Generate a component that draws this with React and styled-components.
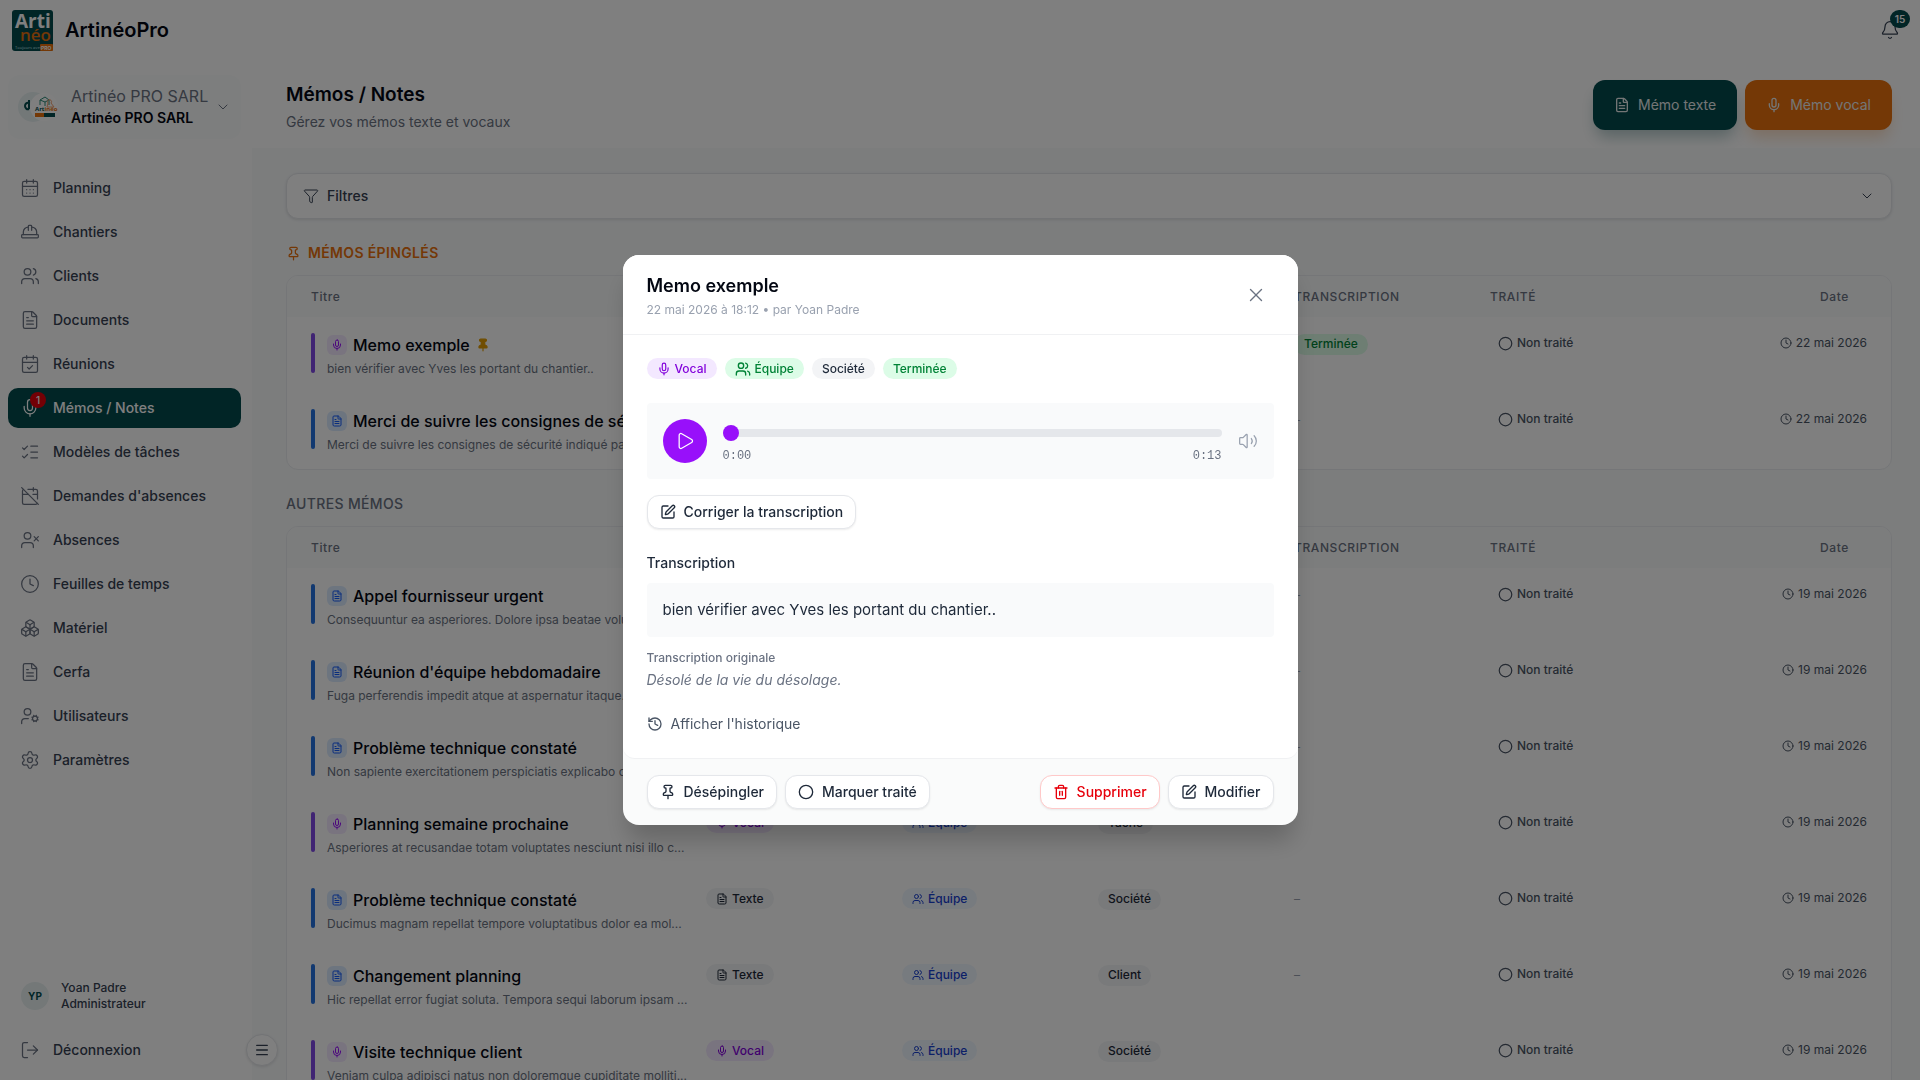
import React, { useState } from "react";
import styled, { createGlobalStyle, css } from "styled-components";
import {
  Bell, Boxes, CalendarCheck, CalendarDays, CalendarOff, ChevronDown, Circle, Clock,
  FileText, Funnel, HardHat, History, ListChecks, LogOut, Menu, Mic, Pin, Play, Settings,
  SquarePen, Trash2, UserCog, UserX, Users, Volume2, X,
} from "lucide-react";

const navItems = [
  { label: "Planning", icon: CalendarDays },
  { label: "Chantiers", icon: HardHat },
  { label: "Clients", icon: Users },
  { label: "Documents", icon: FileText },
  { label: "Réunions", icon: CalendarCheck },
  { label: "Mémos / Notes", icon: Mic, active: true, count: 1 },
  { label: "Modèles de tâches", icon: ListChecks },
  { label: "Demandes d'absences", icon: CalendarOff },
  { label: "Absences", icon: UserX },
  { label: "Feuilles de temps", icon: Clock },
  { label: "Matériel", icon: Boxes },
  { label: "Cerfa", icon: FileText },
  { label: "Utilisateurs", icon: UserCog },
  { label: "Paramètres", icon: Settings },
];

const pinnedMemos = [
  { id: 1, type: "vocal", title: "Memo exemple", text: "bien vérifier avec Yves les portant du chantier..", pinned: true, target: "Société", status: "Terminée", date: "22 mai 2026" },
  { id: 2, type: "texte", title: "Merci de suivre les consignes de sécurité", text: "Merci de suivre les consignes de sécurité indiqué par…", pinned: true, target: "Société", status: "–", date: "22 mai 2026" },
];

const otherMemos = [
  { id: 3, type: "texte", title: "Appel fournisseur urgent", text: "Consequuntur ea asperiores. Dolore ipsa beatae volu…", target: "Société", status: "–", date: "19 mai 2026" },
  { id: 4, type: "texte", title: "Réunion d'équipe hebdomadaire", text: "Fuga perferendis impedit atque at aspernatur itaque…", target: "Société", status: "–", date: "19 mai 2026" },
  { id: 5, type: "texte", title: "Problème technique constaté", text: "Non sapiente exercitationem perspiciatis explicabo c…", target: "Client", status: "–", date: "19 mai 2026" },
  { id: 6, type: "vocal", title: "Planning semaine prochaine", text: "Asperiores at recusandae totam voluptates nesciunt nisi illo c...", target: "Tâche", status: "", date: "19 mai 2026" },
  { id: 7, type: "texte", title: "Problème technique constaté", text: "Ducimus magnam repellat tempore voluptatibus dolor ea mol...", target: "Société", status: "–", date: "19 mai 2026" },
  { id: 8, type: "texte", title: "Changement planning", text: "Hic repellat error fugiat soluta. Tempora sequi laborum ipsam ...", target: "Client", status: "–", date: "19 mai 2026" },
  { id: 9, type: "vocal", title: "Visite technique client", text: "Veniam culpa adipisci natus non doloremque cupiditate molliti...", target: "Société", status: "", date: "19 mai 2026" },
];

function Logo() {
  return (
    <svg width="41" height="41" viewBox="0 0 41 41" overflow="visible" role="img" aria-label="Artinéo">
      <rect width="41" height="41" rx="3" fill="#034a4d" />
      <rect x="28" y="34" width="13" height="7" rx="1" fill="#e8700c" />
      <text x="3" y="18" fontFamily="Open Sans, sans-serif" fontWeight="700" fontSize="19" fill="#fff">Arti</text>
      <text x="8" y="31" fontFamily="Open Sans, sans-serif" fontWeight="600" fontSize="17" fill="#e8700c">néo</text>
      <text x="3" y="39" fontFamily="Open Sans, sans-serif" fontSize="4" fill="#8fc0c2">Toujours avec</text>
      <text x="29" y="40" fontFamily="Inter, sans-serif" fontWeight="700" fontSize="5" fill="#fff">PRO</text>
    </svg>
  );
}

function CompanyMark() {
  return (
    <svg width="40" height="32" viewBox="0 0 40 32" overflow="visible" aria-hidden="true">
      <circle cx="15" cy="16" r="15" fill="#e6f0f1" />
      <path d="M11 9v9M11 12c-2-1-4 1-4 3s2 4 4 3" fill="none" stroke="#034a4d" strokeWidth="2" />
      <circle cx="26" cy="16" r="14" fill="#fff" />
      <path d="M22 14v-5l5-3 4 3v5M22 9l5 2 4-2M27 11v4" fill="none" stroke="#2c8a78" strokeWidth="1" />
      <path d="M30 12a2 2 0 1 1 3 0l3 4h-7z" fill="none" stroke="#f0a171" strokeWidth="1" />
      <text x="17" y="20" fontFamily="Open Sans, sans-serif" fontWeight="700" fontSize="6" fill="#034a4d">Art<tspan fill="#e8700c">inéo</tspan></text>
      <rect x="17" y="22" width="9" height="4" fill="#e8700c" />
      <rect x="26" y="22" width="11" height="4" fill="#034a4d" />
    </svg>
  );
}

function MemoTable({ memos, label }) {
  return (
    <TableCard>
      <Table aria-label={label}>
        <colgroup>
          <col />
          <SmallCol span="5" />
          <DateCol />
        </colgroup>
        <thead>
          <tr>
            <Th>Titre</Th>
            <Th $upper>Type</Th>
            <Th $upper>Portée</Th>
            <Th $upper>Contexte</Th>
            <Th $upper>Transcription</Th>
            <Th $upper>Traité</Th>
            <Th $right>Date</Th>
          </tr>
        </thead>
        <tbody>
          {memos.map((memo) => {
            const vocal = memo.type === "vocal";
            const TypeIcon = vocal ? Mic : FileText;
            return (
              <tr key={memo.id}>
                <Td>
                  <Memo>
                    <MemoBar $vocal={vocal} />
                    <MemoBody>
                      <MemoTitle>
                        <MemoIcon $vocal={vocal}><TypeIcon size={12} /></MemoIcon>
                        <span>{memo.title}</span>
                        {memo.pinned && <Pin size={14} color="#e09a00" fill="#e09a00" />}
                      </MemoTitle>
                      <MemoText>{memo.text}</MemoText>
                    </MemoBody>
                  </Memo>
                </Td>
                <Td><Badge $tone={vocal ? "purple" : "gray"}><TypeIcon size={12} />{vocal ? "Vocal" : "Texte"}</Badge></Td>
                <Td><Badge $tone="blue"><Users size={12} />Équipe</Badge></Td>
                <Td><Badge $tone="gray">{memo.target}</Badge></Td>
                <Td>{memo.status === "Terminée" ? <Badge $tone="green">Terminée</Badge> : <Dash>{memo.status}</Dash>}</Td>
                <Td><StatusButton><Circle size={15} />Non traité</StatusButton></Td>
                <Td $right><MemoDate><Clock size={12} />{memo.date}</MemoDate></Td>
              </tr>
            );
          })}
        </tbody>
      </Table>
    </TableCard>
  );
}

function MemoModal() {
  const [position, setPosition] = useState(0);

  return (
    <Overlay>
      <Modal role="dialog" aria-modal="true" aria-labelledby="memo-title">
        <ModalHeader>
          <div>
            <ModalTitle id="memo-title">Memo exemple</ModalTitle>
            <ModalMeta>22 mai 2026 à 18:12 • par Yoan Padre</ModalMeta>
          </div>
          <CloseButton aria-label="Fermer"><X size={22} strokeWidth={1.5} /></CloseButton>
        </ModalHeader>

        <ModalBody>
          <Badges>
            <Badge $tone="purple"><Mic size={14} />Vocal</Badge>
            <Badge $tone="green"><Users size={16} />Équipe</Badge>
            <Badge $tone="gray">Société</Badge>
            <Badge $tone="green">Terminée</Badge>
          </Badges>

          <Player>
            <PlayButton aria-label="Lecture"><Play size={20} strokeWidth={1.5} /></PlayButton>
            <Track>
              <Range
                aria-label="Position"
                min="0"
                max="13"
                value={position}
                onChange={(e) => setPosition(Number(e.target.value))}
              />
              <Times><span>0:00</span><span>0:13</span></Times>
            </Track>
            <VolumeButton aria-label="Volume"><Volume2 size={20} strokeWidth={1.5} /></VolumeButton>
          </Player>

          <ActionButton><SquarePen size={16} />Corriger la transcription</ActionButton>

          <SectionTitle>Transcription</SectionTitle>
          <Transcript>bien vérifier avec Yves les portant du chantier..</Transcript>

          <OriginalTitle>Transcription originale</OriginalTitle>
          <Original>Désolé de la vie du désolage.</Original>

          <HistoryButton><History size={16} />Afficher l'historique</HistoryButton>
        </ModalBody>

        <ModalFooter>
          <Group>
            <ActionButton><Pin size={16} />Désépingler</ActionButton>
            <ActionButton><Circle size={16} />Marquer traité</ActionButton>
          </Group>
          <Group>
            <ActionButton $danger><Trash2 size={16} />Supprimer</ActionButton>
            <ActionButton><SquarePen size={16} />Modifier</ActionButton>
          </Group>
        </ModalFooter>
      </Modal>
    </Overlay>
  );
}

function App() {
  return (
    <>
      <GlobalStyle />
      <Page>
        <TopBar>
          <Brand href="#"><Logo />ArtinéoPro</Brand>
          <BellButton aria-label="Notifications">
            <Bell size={20} strokeWidth={1.5} />
            <BellCount>15</BellCount>
          </BellButton>
        </TopBar>

        <Columns>
          <Sidebar>
            <CompanyButton>
              <CompanyMark />
              <CompanyNames>
                <span>Artinéo PRO SARL</span>
                <strong>Artinéo PRO SARL</strong>
              </CompanyNames>
              <ChevronDown size={16} strokeWidth={1.5} />
            </CompanyButton>
            <Nav>
              {navItems.map(({ label, icon: Icon, active, count }) => (
                <NavLink href="#" key={label} $active={active}>
                  <NavIcon>
                    <Icon size={20} strokeWidth={1.5} />
                    {count && <NavCount>{count}</NavCount>}
                  </NavIcon>
                  {label}
                </NavLink>
              ))}
            </Nav>
            <User>
              <Avatar>YP</Avatar>
              <div>
                <div>Yoan Padre</div>
                <div>Administrateur</div>
              </div>
            </User>
            <NavLink href="#">
              <NavIcon><LogOut size={20} strokeWidth={1.5} /></NavIcon>
              Déconnexion
            </NavLink>
            <Toggle aria-label="Réduire le menu"><Menu size={16} /></Toggle>
          </Sidebar>

          <Main>
            <PageHeader>
              <div>
                <PageTitle>Mémos / Notes</PageTitle>
                <PageSubtitle>Gérez vos mémos texte et vocaux</PageSubtitle>
              </div>
              <Group>
                <MainButton><FileText size={16} />Mémo texte</MainButton>
                <MainButton $orange><Mic size={16} />Mémo vocal</MainButton>
              </Group>
            </PageHeader>
            <Content>
              <Filters aria-expanded="false">
                <Funnel size={16} strokeWidth={1.5} />
                <span>Filtres</span>
                <ChevronDown size={16} strokeWidth={1.5} />
              </Filters>
              <ListTitle $pinned><Pin size={15} />Mémos épinglés</ListTitle>
              <MemoTable memos={pinnedMemos} label="Mémos épinglés" />
              <ListTitle>Autres mémos</ListTitle>
              <MemoTable memos={otherMemos} label="Autres mémos" />
            </Content>
          </Main>
        </Columns>
      </Page>
      <MemoModal />
    </>
  );
}

const tones = {
  purple: css`background: #f3e8ff; color: #8200db;`,
  green: css`background: #dcfce7; color: #008236;`,
  blue: css`background: #eff6ff; color: #1840d0;`,
  gray: css`background: #f3f4f6; color: #1e2939;`,
};

const GlobalStyle = createGlobalStyle`
  *, *::before, *::after {
    box-sizing: border-box;
  }
  body {
    margin: 0;
    background: #fff;
    color: #364153;
    font-family: Inter, "Liberation Sans", sans-serif;
    font-size: 14px;
    line-height: 20px;
  }
  h1, h2, h3, p {
    margin: 0;
  }
  button {
    padding: 0;
    border: 0;
    background: none;
    color: inherit;
    font: inherit;
    cursor: pointer;
  }
  a {
    color: inherit;
    text-decoration: none;
  }
  svg {
    flex: none;
  }
`;

const Page = styled.div`
  display: flex;
  flex-direction: column;
  height: 100vh;
  overflow: hidden;
`;

const TopBar = styled.header`
  display: flex;
  align-items: center;
  justify-content: space-between;
  flex: none;
  height: 60px;
  padding: 0 20px 0 12px;
`;

const Brand = styled.a`
  display: flex;
  align-items: center;
  gap: 12px;
  color: #030712;
  font-size: 20px;
  font-weight: 600;
`;

const BellButton = styled.button`
  position: relative;
  display: flex;
  color: #364153;
`;

const BellCount = styled.span`
  position: absolute;
  top: -10px;
  right: -10px;
  min-width: 20px;
  border-radius: 10px;
  background: #034a4d;
  color: #fff;
  font-size: 10px;
  font-weight: 600;
  line-height: 18px;
  text-align: center;
`;

const Columns = styled.div`
  display: flex;
  flex: 1;
  min-height: 0;
`;

const Sidebar = styled.aside`
  position: relative;
  display: flex;
  flex-direction: column;
  flex: none;
  width: 252px;
  padding: 15px 11px 10px 8px;
`;

const CompanyButton = styled.button`
  display: flex;
  align-items: center;
  gap: 13px;
  height: 64px;
  padding: 0 16px 0 10px;
  border-radius: 12px;
  background: #fbfcfc;
  color: #6a7282;
  text-align: left;

  > svg:last-child {
    margin-left: -6px;
  }
`;

const CompanyNames = styled.span`
  display: flex;
  flex-direction: column;
  font-size: 16px;
  line-height: 22px;
  white-space: nowrap;

  strong {
    color: #030712;
    font-size: 14px;
    font-weight: 600;
  }
`;

const Nav = styled.nav`
  display: flex;
  flex: 1;
  flex-direction: column;
  gap: 4px;
  margin-top: 29px;
`;

const NavLink = styled.a`
  display: flex;
  align-items: center;
  gap: 13px;
  height: 40px;
  padding: 0 12px;
  border-radius: 10px;
  background: ${({ $active }) => ($active ? "#034a4d" : "none")};
  color: ${({ $active }) => ($active ? "#fff" : "#364153")};
  font-weight: 500;

  svg {
    color: ${({ $active }) => ($active ? "#fff" : "#6a7282")};
  }
`;

const NavIcon = styled.span`
  position: relative;
  display: flex;
`;

const NavCount = styled.span`
  position: absolute;
  top: -6px;
  right: -6px;
  width: 16px;
  border-radius: 8px;
  background: #e7000b;
  color: #fff;
  font-size: 10px;
  line-height: 16px;
  text-align: center;
`;

const User = styled.div`
  display: flex;
  align-items: center;
  gap: 12px;
  padding: 0 13px;
  margin-bottom: 18px;
  font-size: 12px;
  font-weight: 500;
  line-height: 16px;
`;

const Avatar = styled.span`
  width: 28px;
  border-radius: 14px;
  background: #e8f1f1;
  color: #034a4d;
  font-size: 10px;
  font-weight: 700;
  line-height: 28px;
  text-align: center;
`;

const Toggle = styled.button`
  position: absolute;
  right: -26px;
  bottom: 14px;
  display: flex;
  align-items: center;
  justify-content: center;
  width: 32px;
  height: 32px;
  border: 1px solid #e5e7eb;
  border-radius: 16px;
  background: #fff;
  box-shadow: 0 1px 3px rgba(0, 0, 0, 0.1);
`;

const Main = styled.main`
  display: flex;
  flex: 1;
  flex-direction: column;
  min-width: 0;
`;

const PageHeader = styled.div`
  display: flex;
  align-items: flex-start;
  justify-content: space-between;
  flex: none;
  height: 88px;
  padding: 20px 28px 0 34px;
`;

const PageTitle = styled.h1`
  color: #030712;
  font-size: 19px;
  font-weight: 600;
  line-height: 30px;
`;

const PageSubtitle = styled.p`
  margin-top: 2px;
  color: #6a7282;
`;

const Group = styled.div`
  display: flex;
  gap: 8px;
`;

const MainButton = styled.button`
  display: flex;
  align-items: center;
  gap: 8px;
  height: 50px;
  padding: 0 21px;
  border-radius: 12px;
  background: ${({ $orange }) => ($orange ? "#e8700c" : "#034a4d")};
  box-shadow: 0 10px 15px -3px ${({ $orange }) => ($orange ? "rgba(232, 112, 12, 0.25)" : "rgba(3, 74, 77, 0.3)")};
  color: #e8ecec;
`;

const Content = styled.div`
  flex: 1;
  min-height: 0;
  padding: 25px 28px 0 34px;
  background: #f8fafb;
`;

const Filters = styled.button`
  display: flex;
  align-items: center;
  gap: 8px;
  width: 100%;
  height: 46px;
  padding: 0 16px;
  border: 1px solid #e5e7eb;
  border-radius: 12px;
  background: #fff;
  box-shadow: 0 1px 3px rgba(0, 0, 0, 0.1);
  font-weight: 500;
  text-align: left;

  span {
    flex: 1;
  }
`;

const ListTitle = styled.h2`
  display: flex;
  align-items: center;
  gap: 7px;
  margin: 24px 0 12px;
  color: ${({ $pinned }) => ($pinned ? "#e8700c" : "#6a7282")};
  font-size: 14px;
  font-weight: ${({ $pinned }) => ($pinned ? 600 : 500)};
  letter-spacing: 0.025em;
  text-transform: uppercase;
`;

const TableCard = styled.div`
  overflow: hidden;
  border: 1px solid #ebedf0;
  border-radius: 12px;
  background: #fff;
`;

const Table = styled.table`
  width: 100%;
  border-collapse: collapse;
  table-layout: fixed;
`;

const SmallCol = styled.col`
  width: 196px;
`;

const DateCol = styled.col`
  width: 229px;
`;

const Th = styled.th`
  height: 41px;
  padding: ${({ $right }) => ($right ? "0 42px 0 24px" : "0 24px")};
  background: #f9fafb;
  color: #6a7282;
  font-size: 12px;
  font-weight: 500;
  letter-spacing: 0.05em;
  text-align: ${({ $right }) => ($right ? "right" : "left")};
  text-transform: ${({ $upper }) => ($upper ? "uppercase" : "none")};
`;

const Td = styled.td`
  height: 76px;
  padding: 16px 24px 0;
  text-align: ${({ $right }) => ($right ? "right" : "left")};
  vertical-align: top;
`;

const Memo = styled.div`
  display: flex;
  gap: 12px;
`;

const MemoBar = styled.span`
  flex: none;
  width: 4px;
  height: 40px;
  border-radius: 2px;
  background: ${({ $vocal }) => ($vocal ? "#8049e6" : "#2472e0")};
`;

const MemoBody = styled.div`
  white-space: nowrap;
`;

const MemoTitle = styled.div`
  display: flex;
  align-items: center;
  gap: 6px;
  color: #030712;
  font-size: 16px;
  font-weight: 500;
  line-height: 24px;
`;

const MemoIcon = styled.span`
  display: flex;
  align-items: center;
  justify-content: center;
  width: 20px;
  height: 20px;
  border-radius: 6px;
  background: ${({ $vocal }) => ($vocal ? "#f3e8ff" : "#dbeafe")};
  color: ${({ $vocal }) => ($vocal ? "#9810fa" : "#155dfc")};
`;

const MemoText = styled.p`
  margin-top: 4px;
  color: #6a7282;
  font-size: 12px;
  line-height: 16px;
`;

const Badge = styled.span`
  display: inline-flex;
  align-items: center;
  gap: 4px;
  height: 21px;
  padding: 0 10px;
  border-radius: 11px;
  font-size: 12px;
  font-weight: 500;
  ${({ $tone }) => tones[$tone]}
`;

const Dash = styled.span`
  color: #99a1af;
  font-size: 12px;
`;

const StatusButton = styled.button`
  display: inline-flex;
  align-items: center;
  gap: 4px;
  padding: 0 8px;
  color: #4a5565;
  font-size: 12px;
  font-weight: 500;
`;

const MemoDate = styled.span`
  display: inline-flex;
  align-items: center;
  gap: 4px;
  color: #4a5565;
  font-size: 12px;
`;

const Overlay = styled.div`
  position: fixed;
  inset: 0;
  display: flex;
  align-items: center;
  justify-content: center;
  background: rgba(0, 0, 0, 0.5);
`;

const Modal = styled.section`
  width: 100%;
  max-width: 675px;
  border-radius: 16px;
  background: #fafbfb;
  box-shadow: 0 20px 25px -5px rgba(0, 0, 0, 0.2);
`;

const ModalHeader = styled.header`
  display: flex;
  justify-content: space-between;
  align-items: center;
  padding: 17px 31px 16px 24px;
  border-bottom: 1px solid #f0f1f3;
  border-radius: 16px 16px 0 0;
  background: #fff;
`;

const ModalTitle = styled.h2`
  color: #030712;
  font-size: 18px;
  font-weight: 600;
  line-height: 28px;
`;

const ModalMeta = styled.p`
  margin-top: 2px;
  color: #99a1af;
  font-size: 12px;
  line-height: 16px;
`;

const CloseButton = styled.button`
  display: flex;
  color: #6a7282;
`;

const ModalBody = styled.div`
  padding: 23px 24px 24px;
  border-bottom: 1px solid #f0f1f3;
  border-radius: 0 0 12px 12px;
  background: #fff;
`;

const Badges = styled.div`
  display: flex;
  gap: 8px;
`;

const Player = styled.div`
  display: flex;
  align-items: center;
  gap: 16px;
  height: 76px;
  margin: 24px 0 16px;
  padding: 0 16px;
  border-radius: 4px;
  background: #f9fafb;
`;

const PlayButton = styled.button`
  display: flex;
  align-items: center;
  justify-content: center;
  width: 44px;
  height: 44px;
  border-radius: 22px;
  background: #9810fa;
  color: #fff;
`;

const Track = styled.div`
  flex: 1;
`;

const Range = styled.input.attrs({ type: "range" })`
  display: block;
  width: 100%;
  height: 8px;
  margin: 10px 0 11px;
  border-radius: 4px;
  background: #e5e7eb;
  appearance: none;

  &::-webkit-slider-thumb {
    width: 16px;
    height: 16px;
    border-radius: 8px;
    background: #9810fa;
    appearance: none;
  }
`;

const Times = styled.div`
  display: flex;
  justify-content: space-between;
  color: #6a7282;
  font-family: "Liberation Mono", monospace;
  font-size: 12px;
  line-height: 16px;
`;

const VolumeButton = styled.button`
  display: flex;
  color: #99a1af;
`;

const ActionButton = styled.button`
  display: flex;
  align-items: center;
  gap: 8px;
  height: 34px;
  padding: 0 12px;
  border: 1px solid ${({ $danger }) => ($danger ? "#ffc9c9" : "#e5e7eb")};
  border-radius: 12px;
  background: #fff;
  box-shadow: 0 1px 2px rgba(0, 0, 0, 0.08);
  color: ${({ $danger }) => ($danger ? "#e7000b" : "#1e2939")};
  font-weight: 500;
`;

const SectionTitle = styled.h3`
  margin: 24px 0 10px;
  color: #1e2939;
  font-size: 14px;
  font-weight: 500;
`;

const Transcript = styled.p`
  padding: 15px 16px;
  border-radius: 4px;
  background: #f9fafb;
  color: #1e2939;
  font-size: 15px;
  line-height: 24px;
`;

const OriginalTitle = styled.h3`
  margin-top: 13px;
  color: #6a7282;
  font-size: 12px;
  font-weight: 500;
  line-height: 16px;
`;

const Original = styled.p`
  margin-top: 4px;
  color: #6a7282;
  font-style: italic;
`;

const HistoryButton = styled.button`
  display: flex;
  align-items: center;
  gap: 8px;
  margin-top: 24px;
  color: #4a5565;
`;

const ModalFooter = styled.footer`
  display: flex;
  justify-content: space-between;
  padding: 16px 24px;
`;

export default App;
